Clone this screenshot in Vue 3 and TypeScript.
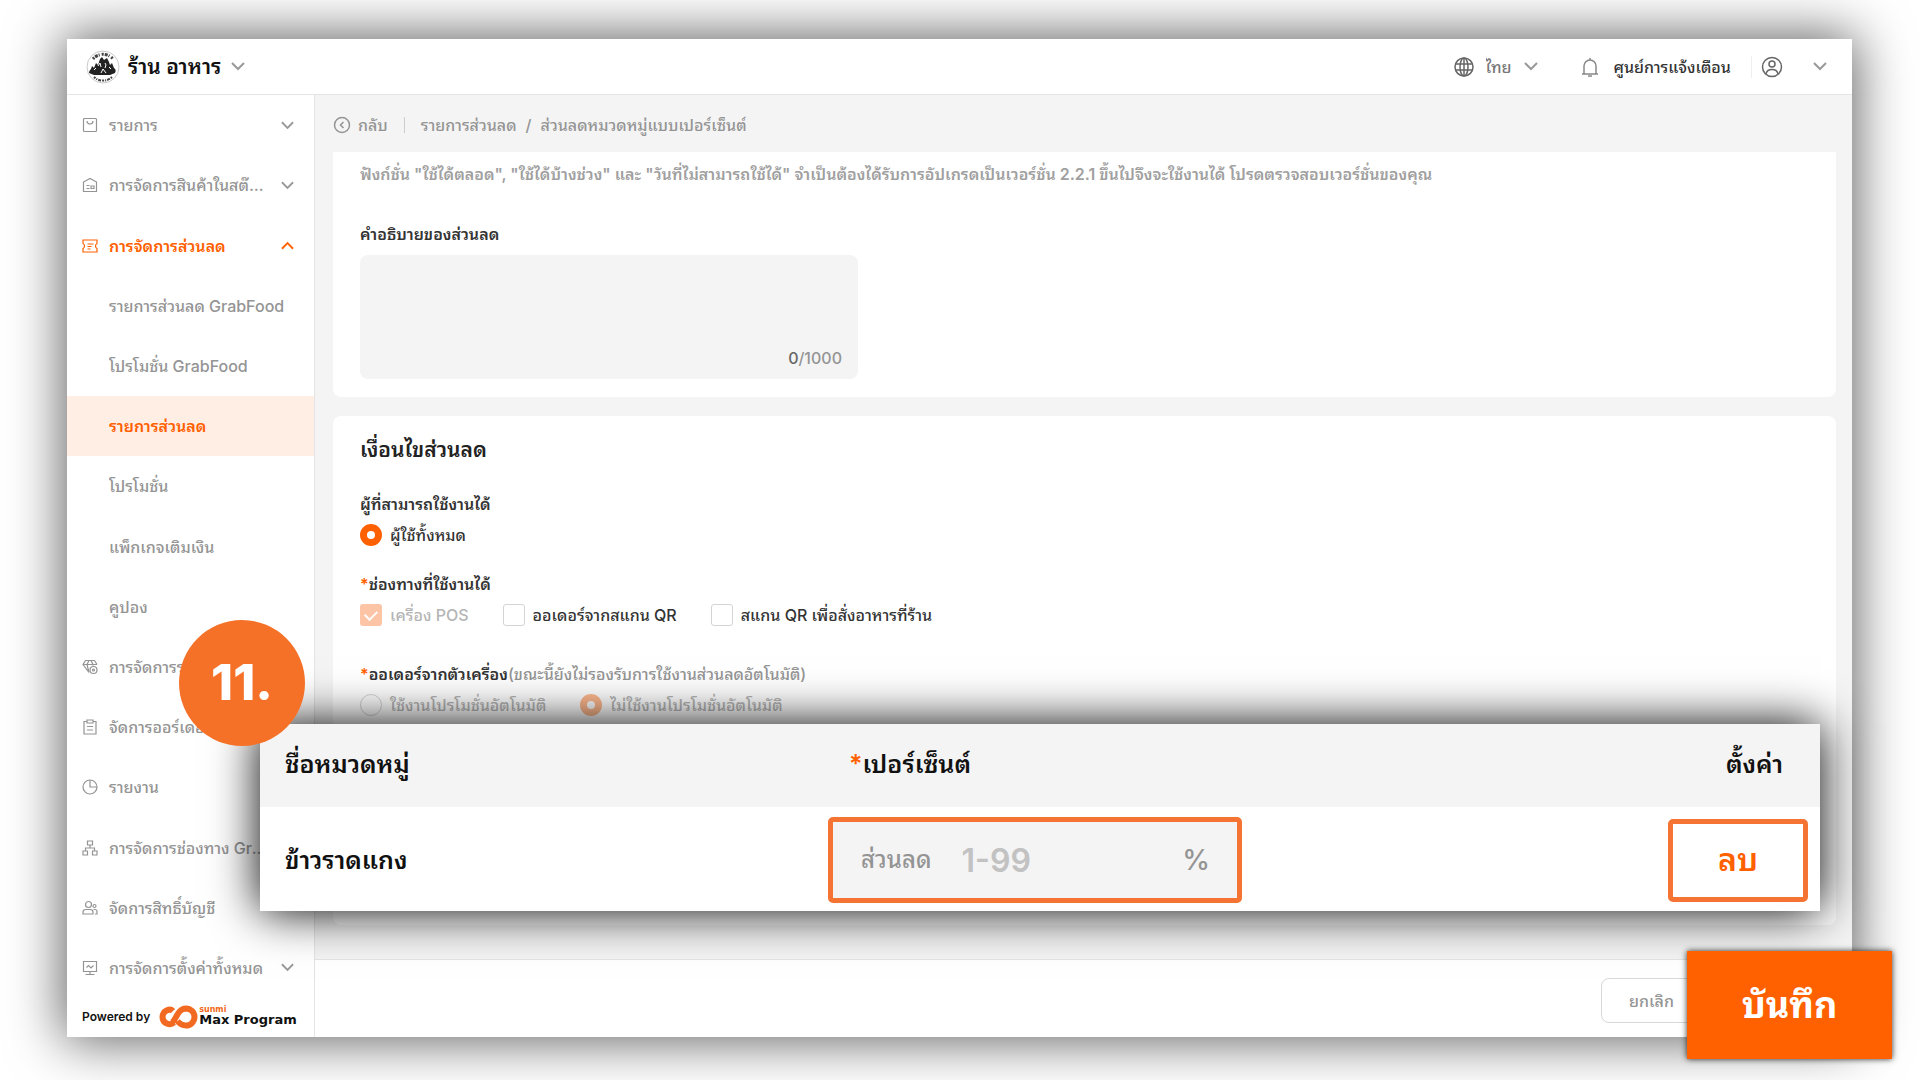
<script setup lang="ts">
import { ref } from 'vue'

interface MenuItem {
  label: string
  icon?: string
  arrow?: 'up' | 'down'
  state?: 'open' | 'active'
}

const menu: MenuItem[] = [
  { label: 'รายการ', icon: 'bag', arrow: 'down' },
  { label: 'การจัดการสินค้าในสต๊อกสินค้า', icon: 'store', arrow: 'down' },
  { label: 'การจัดการส่วนลด', icon: 'ticket', arrow: 'up', state: 'open' },
  { label: 'รายการส่วนลด GrabFood' },
  { label: 'โปรโมชั่น GrabFood' },
  { label: 'รายการส่วนลด', state: 'active' },
  { label: 'โปรโมชั่น' },
  { label: 'แพ็กเกจเติมเงิน' },
  { label: 'คูปอง' },
  { label: 'การจัดการระบบ', icon: 'gem' },
  { label: 'จัดการออร์เดอร์', icon: 'clipboard' },
  { label: 'รายงาน', icon: 'clock' },
  { label: 'การจัดการช่องทาง GrabFood', icon: 'network' },
  { label: 'จัดการสิทธิ์บัญชี', icon: 'users' },
  { label: 'การจัดการตั้งค่าทั้งหมด', icon: 'monitor', arrow: 'down' },
]

const description = ref('')
const percent = ref('')
</script>

<template>
  <div class="page">
    <div class="window">
      <header class="topbar">
        <button class="shop" type="button">
          <svg class="shop-logo" viewBox="0 0 34 34">
            <circle cx="17" cy="17" r="16" fill="#fff" stroke="#c9c9c9" />
            <path d="M3 23c0-2 1-3 2-4l1-3 2 2 2-5 2 2 2-6 2-2 2 3 3-2 2 4 1 3 2-2 2 5c2 1 2 3 1 5l-5 2H8z" fill="#222" stroke="none" />
            <path d="M12 16l2-3 1 4M19 13l1 2-1 3M23 17l2 2M8 20l2-2M15 23l2-4 3 4" stroke="#fff" fill="none" />
            <path d="M7 9A13 13 0 0 1 27 9" fill="none" stroke="#444" stroke-width="3" stroke-dasharray="2 1 3 1 1 2" />
            <path d="M8 27A13 13 0 0 0 26 27" fill="none" stroke="#444" stroke-width="2" stroke-dasharray="2 1 1 1 3 1" />
          </svg>
          <span>ร้าน อาหาร</span>
          <svg class="chev" viewBox="0 0 14 9"><path d="M1 1l6 6 6-6" /></svg>
        </button>

        <div class="tools">
          <div class="lang">
            <svg class="globe" viewBox="0 0 20 20">
              <circle cx="10" cy="10" r="9" /><ellipse cx="10" cy="10" rx="4" ry="9" /><path d="M10 1v18M2 7h16M2 13h16" />
            </svg>
            <select aria-label="ภาษา"><option>ไทย</option></select>
            <svg class="chev" viewBox="0 0 14 9"><path d="M1 1l6 6 6-6" /></svg>
          </div>
          <button class="notice" type="button">
            <svg class="bell" viewBox="0 0 18 20"><path d="M1 17h16M3 17V9a6 6 0 0 1 12 0v8M9 3V1" /><path d="M7 19h4" /></svg>
            <span>ศูนย์การแจ้งเตือน</span>
          </button>
          <button class="account" type="button" aria-label="บัญชี">
            <svg class="user" viewBox="0 0 22 22"><circle cx="11" cy="11" r="9.5" /><circle cx="11" cy="8" r="3" /><path d="M5 18c1-6 11-6 12 0" /></svg>
            <svg class="chev" viewBox="0 0 14 9"><path d="M1 1l6 6 6-6" /></svg>
          </button>
        </div>
      </header>

      <div class="body">
        <aside class="sidebar">
          <nav class="menu">
            <a v-for="(item, i) in menu" :key="i" href="#" class="item" :class="[item.state, { top: item.icon }]">
              <svg class="ico" viewBox="0 0 16 16">
                <template v-if="item.icon === 'bag'"><rect x="1.5" y="1.5" width="13" height="13" rx="1" /><path d="M5 4c0 4 6 4 6 0" /></template>
                <template v-else-if="item.icon === 'store'"><path d="M1.500 14.500V5L8 1.500 14.500 5v9.500z" /><path d="M4.500 8.500h3M4.500 11.500h3M9 9h3v2.500H9z" /></template>
                <template v-else-if="item.icon === 'ticket'"><path d="M1 2h14v3.500c-2 1-2 4 0 5V14H1v-3.500c2-1 2-4 0-5z" /><path d="M5.500 6h6M5.500 8.500h4M5.500 11h3" /></template>
                <template v-else-if="item.icon === 'gem'"><path d="M7 13.500L1 5.500 3.500 1.500h9L15 5.500M1 5.500h14M5 5.500l2 8M5 5.500l2-4M11 5.500l-2-4M11 5.500v1" /><circle cx="11.500" cy="11" r="3.500" /><circle cx="11.500" cy="11" r="1" /></template>
                <template v-else-if="item.icon === 'clipboard'"><path d="M5 2.500H2v12.500h12V2.500h-3M5 1h6v3H5zM5 7.500h6M5 11h6" /></template>
                <template v-else-if="item.icon === 'clock'"><circle cx="8" cy="8" r="7" /><path d="M8 1v7h7" /></template>
                <template v-else-if="item.icon === 'network'"><path d="M5.500 1h5v4h-5zM1 11h4.500v4H1zM10.500 11H15v4h-4.500zM8 5v3M3.500 11V8h9v3" /></template>
                <template v-else-if="item.icon === 'users'"><circle cx="6.500" cy="4.500" r="3" /><path d="M1 14v-2c0-2 1-2.500 3-2.500h4c2 0 3 .5 3 2.500v2zM11.500 9.500H13c1.500 0 2 .5 2 2V14h-2" /><circle cx="12.500" cy="6" r="1.500" /></template>
                <template v-else-if="item.icon === 'monitor'"><path d="M1.500 1.500h13v10h-13zM8 11.500V14M3.500 14.500h9M4.500 7.500l2-2 2.500 2.500 2.500-2.500" /></template>
              </svg>
              <span class="item-label">{{ item.label }}</span>
              <svg v-if="item.arrow" class="chev small" viewBox="0 0 14 9">
                <path :d="item.arrow === 'up' ? 'M1 8l6-6 6 6' : 'M1 1l6 6 6-6'" />
              </svg>
            </a>
          </nav>
          <div class="powered">
            <span class="by">Powered by</span>
            <svg class="infinity" viewBox="0 0 40 24">
              <path d="M15 17.500C11 21 3.500 18.500 3.500 12S11 3 14 6M13 17.500C18 14 18 4 27 3.500a8.300 8.300 0 0 1 0 17C22 20.500 20 18 18.500 16" fill="none" stroke="#f26a21" stroke-width="6" />
            </svg>
            <span class="brand"><small>sunmi</small><b>Max Program</b></span>
          </div>
        </aside>

        <main class="main">
          <div class="crumbs">
            <button class="back" type="button">
              <svg viewBox="0 0 18 18"><circle cx="9" cy="9" r="7.500" /><path d="M10.500 6L7.500 9l3 3" /></svg>
              <span>กลับ</span>
            </button>
            <i class="sep"></i>
            <a href="#">รายการส่วนลด</a>
            <span class="slash">/</span>
            <span>ส่วนลดหมวดหมู่แบบเปอร์เซ็นต์</span>
          </div>

          <div class="content">
            <section class="card first">
              <p class="note">ฟังก์ชั่น "ใช้ได้ตลอด", "ใช้ได้บ้างช่วง" และ "วันที่ไม่สามารถใช้ได้" จำเป็นต้องได้รับการอัปเกรดเป็นเวอร์ชั่น 2.2.1 ขึ้นไปจึงจะใช้งานได้ โปรดตรวจสอบเวอร์ชั่นของคุณ</p>
              <label class="field-label" for="desc">คำอธิบายของส่วนลด</label>
              <div class="area">
                <textarea id="desc" v-model="description" maxlength="1000"></textarea>
                <span class="count"><b>{{ description.length }}</b>/1000</span>
              </div>
            </section>

            <section class="card second">
              <h2>เงื่อนไขส่วนลด</h2>
              <fieldset>
                <legend>ผู้ที่สามารถใช้งานได้</legend>
                <div class="options">
                  <label><input type="radio" name="who" checked /><span>ผู้ใช้ทั้งหมด</span></label>
                </div>
              </fieldset>
              <fieldset class="channels">
                <legend><em>*</em>ช่องทางที่ใช้งานได้</legend>
                <div class="options">
                  <label class="off"><input type="checkbox" checked disabled /><span>เครื่อง POS</span></label>
                  <label><input type="checkbox" /><span>ออเดอร์จากสแกน QR</span></label>
                  <label><input type="checkbox" /><span>สแกน QR เพื่อสั่งอาหารที่ร้าน</span></label>
                </div>
              </fieldset>
              <fieldset>
                <legend><em>*</em>ออเดอร์จากตัวเครื่อง<span class="hint">(ขณะนี้ยังไม่รองรับการใช้งานส่วนลดอัตโนมัติ)</span></legend>
                <div class="options">
                  <label class="off"><input type="radio" name="auto" disabled /><span>ใช้งานโปรโมชั่นอัตโนมัติ</span></label>
                  <label class="off"><input type="radio" name="auto" checked disabled /><span>ไม่ใช้งานโปรโมชั่นอัตโนมัติ</span></label>
                </div>
              </fieldset>
            </section>
          </div>

          <footer class="actions">
            <button class="cancel" type="button">ยกเลิก</button>
          </footer>
        </main>
      </div>
    </div>

    <table class="callout">
      <thead>
        <tr><th class="name">ชื่อหมวดหมู่</th><th class="pct"><em>*</em>เปอร์เซ็นต์</th><th class="set">ตั้งค่า</th></tr>
      </thead>
      <tbody>
        <tr>
          <td class="name">ข้าวราดแกง</td>
          <td class="pct-cell">
            <div class="pct-box">
              <label for="pct">ส่วนลด</label>
              <input id="pct" v-model="percent" type="text" placeholder="1-99" />
              <span>%</span>
            </div>
          </td>
          <td class="set-cell"><button class="remove" type="button">ลบ</button></td>
        </tr>
      </tbody>
    </table>

    <div class="step">11.</div>
    <button class="save" type="button">บันทึก</button>
  </div>
</template>

<style>
body {
  margin: 0;
  background: #fff;
}
</style>

<style scoped>
* {
  box-sizing: border-box;
}
.page {
  position: relative;
  display: flex;
  min-height: 100vh;
  padding: 39px 68px 43px 67px;
  overflow: hidden;
  font-family: Inter, "Noto Sans Thai Looped", "Noto Looped Thai", Loma, Umpush, Waree, Garuda, Thonburi, "Noto Sans Thai", "Noto Sans", sans-serif;
  font-size: 16px;
  font-weight: 500;
  line-height: 24px;
  color: #333;
}
button, input, select, textarea {
  font: inherit;
  color: inherit;
  border: 0;
  padding: 0;
  margin: 0;
  background: none;
}
a {
  color: inherit;
  text-decoration: none;
}
svg {
  fill: none;
  stroke: currentColor;
  flex: none;
}
em {
  color: #ff6000;
  font-style: normal;
}
.window {
  flex: 1;
  display: flex;
  flex-direction: column;
  min-width: 0;
  background: #fff;
  box-shadow: 0 0 50px 4px rgba(0, 0, 0, 0.62);
}
.topbar {
  display: flex;
  align-items: center;
  justify-content: space-between;
  height: 56px;
  padding: 0 25px 0 19px;
  border-bottom: 1px solid #e4e4e4;
}
.shop, .tools, .lang, .notice, .account {
  display: flex;
  align-items: center;
}
.shop {
  gap: 8px;
  font-size: 21px;
  font-weight: 600;
  color: #111;
}
.shop-logo {
  width: 34px;
  height: 34px;
}
.chev {
  width: 14px;
  height: 9px;
  stroke-width: 2;
  color: #999;
}
.chev.small {
  width: 13px;
}
.shop .chev {
  margin-left: 2px;
}
.lang {
  gap: 12px;
  color: #777;
}
.lang select {
  appearance: none;
  field-sizing: content;
}
.globe {
  width: 20px;
  height: 20px;
  stroke-width: 1.5;
  color: #666;
}
.notice {
  gap: 15px;
  margin-left: 43px;
}
.bell {
  width: 18px;
  height: 20px;
  stroke-width: 1.5;
  color: #888;
}
.account {
  gap: 30px;
  margin-left: 20px;
  padding-left: 9px;
  border-left: 1px solid #eee;
}
.user {
  width: 22px;
  height: 22px;
  stroke-width: 1.5;
  color: #666;
}
.body {
  flex: 1;
  display: flex;
}
.sidebar {
  display: flex;
  flex-direction: column;
  flex: none;
  width: 248px;
  border-right: 1px solid #e4e4e4;
}
.menu {
  flex: 1;
  display: flex;
  flex-direction: column;
}
.item {
  flex: 1 0 60px;
  display: flex;
  align-items: center;
  justify-content: space-between;
  padding: 0 20px 0 15px;
  color: #949494;
}
.ico {
  width: 16px;
  height: 16px;
  margin-right: 11px;
  stroke-width: 1.2;
}
.item-label {
  flex: 1;
  min-width: 0;
  overflow: hidden;
  text-overflow: ellipsis;
  white-space: nowrap;
}
.top .item-label {
  max-width: 162px;
  margin-right: auto;
}
.item .chev {
  margin-left: 14px;
}
.open, .open .chev {
  color: #ff6000;
}
.open, .active {
  font-weight: 600;
}
.active {
  color: #ff6000;
  background: #ffeee4;
}
.powered {
  display: flex;
  align-items: center;
  height: 39px;
  padding: 0 0 2px 15px;
  color: #111;
}
.by {
  font-size: 12px;
  font-weight: 600;
}
.infinity {
  width: 40px;
  height: 24px;
  margin-left: 9px;
}
.brand {
  display: flex;
  flex-direction: column;
  font-family: "DejaVu Sans", sans-serif;
  font-size: 13px;
  font-weight: 700;
  line-height: 14px;
  white-space: nowrap;
}
.brand small {
  font-size: 8px;
  line-height: 7px;
  color: #f26a21;
}
.main {
  flex: 1;
  display: flex;
  flex-direction: column;
  min-width: 0;
  background: #f4f4f4;
}
.crumbs {
  display: flex;
  align-items: center;
  height: 57px;
  padding: 2px 18px 0;
  color: #949494;
}
.back {
  display: flex;
  align-items: center;
  gap: 7px;
}
.back svg {
  width: 18px;
  height: 18px;
  stroke-width: 1.5;
}
.sep {
  width: 1px;
  height: 16px;
  margin: 0 16px;
  background: #ccc;
}
.slash {
  margin: 0 9px;
}
.content {
  flex: 1;
  display: flex;
  flex-direction: column;
  gap: 19px;
  padding: 0 16px 34px 18px;
}
.card {
  padding: 0 27px;
  border-radius: 8px;
  background: #fff;
}
.first {
  padding-bottom: 18px;
  border-radius: 0 0 8px 8px;
}
.note {
  margin: 0;
  padding: 10px 0 36px;
  font-weight: 600;
  color: #a0a0a0;
}
.field-label {
  display: block;
  margin-bottom: 9px;
  font-weight: 600;
}
.area {
  display: flex;
  flex-direction: column;
  max-width: 498px;
  height: 124px;
  padding: 8px 16px 9px;
  border-radius: 8px;
  background: #f4f4f4;
}
.area textarea {
  flex: 1;
  resize: none;
  outline: 0;
}
.count {
  align-self: flex-end;
  color: #949494;
}
.count b {
  font-weight: 500;
  color: #666;
}
.second {
  flex: 1;
}
h2 {
  margin: 0;
  padding: 20px 0 28px;
  font-size: 21px;
  font-weight: 600;
  line-height: 28px;
  color: #222;
}
fieldset {
  margin: 0 0 25px;
  padding: 0;
  border: 0;
}
.channels {
  margin-bottom: 35px;
}
legend {
  padding: 0;
  font-weight: 600;
}
.hint {
  font-weight: 500;
  color: #949494;
}
.options {
  display: flex;
  gap: 34px;
  padding-top: 7px;
}
.options label {
  display: flex;
  align-items: center;
  gap: 8px;
}
.options input {
  appearance: none;
  display: grid;
  place-items: center;
  width: 22px;
  height: 22px;
  border: 1px solid #d4d4d4;
  border-radius: 3px;
}
.options input[type="radio"] {
  border-radius: 50%;
}
.options input[type="radio"]:checked {
  border: 7px solid #ff6000;
}
.options input[type="radio"]:disabled:checked {
  border-color: #ffb98f;
}
.options input[type="checkbox"]:checked {
  border: 0;
  background: #fdc4a6;
}
.options input[type="checkbox"]:checked::after {
  content: "";
  width: 10px;
  height: 6px;
  border: solid #fff;
  border-width: 0 0 2px 2px;
  transform: translateY(-1px) rotate(-45deg);
}
.off {
  color: #b5b5b5;
}
.actions {
  display: flex;
  justify-content: flex-end;
  align-items: flex-start;
  height: 78px;
  padding: 18px 150px 0 0;
  border-top: 1px solid #e4e4e4;
  background: #fff;
}
.cancel {
  width: 101px;
  height: 45px;
  border: 1px solid #d8d8d8;
  border-radius: 8px;
  color: #949494;
}
.callout {
  position: absolute;
  top: 724px;
  left: 260px;
  right: 100px;
  width: calc(100% - 360px);
  border-collapse: collapse;
  table-layout: fixed;
  background: #fff;
  box-shadow: 0 0 45px #000;
  font-size: 25px;
  font-weight: 600;
  line-height: 32px;
  color: #111;
  text-align: left;
}
.callout th, .callout td {
  padding: 0;
  font-weight: 600;
}
.callout thead tr {
  height: 83px;
  background: #f4f4f4;
}
.callout tbody tr {
  height: 104px;
}
.callout th {
  padding-bottom: 4px;
}
.callout .name {
  width: 568px;
  padding-left: 25px;
}
.callout .pct {
  padding-left: 21px;
}
.callout .set {
  width: 200px;
  padding-right: 37px;
  text-align: right;
}
.callout tbody td {
  padding-top: 2px;
}
.pct-box {
  display: flex;
  align-items: center;
  width: 414px;
  height: 86px;
  padding: 0 27px 0 28px;
  border: 5px solid #f57333;
  border-radius: 5px;
  background: #f4f4f4;
  font-size: 24px;
  font-weight: 500;
  color: #949494;
}
.pct-box input {
  flex: 1;
  min-width: 0;
  margin-left: 30px;
  font-size: 32px;
  font-weight: 600;
  outline: 0;
}
.pct-box input::placeholder {
  color: #c2c2c2;
  opacity: 1;
}
.pct-box span {
  font-size: 28px;
}
.callout .set-cell {
  padding-right: 12px;
}
.remove {
  display: block;
  width: 140px;
  height: 83px;
  margin-left: auto;
  border: 5px solid #f57333;
  border-radius: 5px;
  font-size: 32px;
  color: #ff6000;
}
.step {
  position: absolute;
  top: 620px;
  left: 179px;
  width: 126px;
  height: 126px;
  border-radius: 50%;
  background: #f57128;
  font-size: 50px;
  font-weight: 800;
  line-height: 124px;
  text-align: center;
  color: #fff;
}
.save {
  position: absolute;
  top: 951px;
  right: 28px;
  width: 205px;
  height: 108px;
  background: #ff6000;
  box-shadow: 0 0 6px rgba(0, 0, 0, 0.8);
  font-size: 36px;
  font-weight: 700;
  color: #fff;
}
</style>
